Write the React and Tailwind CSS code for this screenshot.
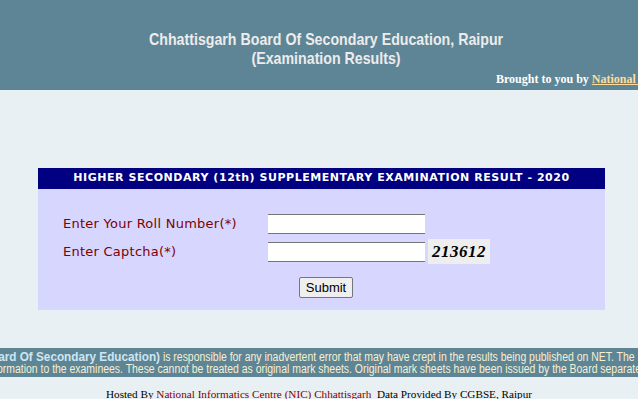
export default function App() {
  const arial = { fontFamily: '"Liberation Sans", Arial, sans-serif' };
  return (
    <div className="w-[638px] h-[399px] overflow-hidden bg-[#e9f0f3]">
      {/* Header */}
      <div className="h-[90px] bg-[#5e8595] flex flex-col items-center pt-[30px]">
        <div
          className="ml-[14px] text-[17px] font-bold leading-[19px] text-[#ececec] text-center scale-x-[0.835]"
          style={arial}
        >
          Chhattisgarh Board Of Secondary Education, Raipur
          <br />
          (Examination Results)
        </div>
        <div className="self-stretch pl-[496px] mt-[4px] whitespace-nowrap overflow-hidden font-['Liberation_Serif',serif] text-[12px] font-bold leading-[14px] text-white">
          Brought to you by{" "}
          <span className="text-[#ffdd99] underline">National Informatics Centre</span>
        </div>
      </div>

      {/* Form box */}
      <div className="mt-[78px] ml-[38px] w-[567px] h-[142px] bg-[#d6d6ff] flex flex-col">
        <div className="h-[21px] bg-[#000080] flex items-center justify-center font-['DejaVu_Sans',Verdana,sans-serif] text-[11px] tracking-[0.55px] font-bold text-white">
          HIGHER SECONDARY (12th) SUPPLEMENTARY EXAMINATION RESULT - 2020
        </div>
        <div className="pt-[25px] pl-[25px] flex flex-col gap-[9px] font-['DejaVu_Sans',Verdana,sans-serif] text-[13px] tracking-[0.25px] text-[#800000]">
          <div className="flex items-center h-[19px]">
            <span className="w-[205px]">Enter Your Roll Number(*)</span>
            <input className="w-[157px] h-[20px] bg-white border-y border-[#767676] outline-none" />
          </div>
          <div className="flex items-center h-[19px]">
            <span className="w-[205px]">Enter Captcha(*)</span>
            <input className="w-[157px] h-[20px] bg-white border-y border-[#767676] outline-none" />
            <div className="ml-[3px] w-[62px] h-[25px] bg-[#eeeeee] flex items-center justify-center font-['Liberation_Serif',serif] italic font-bold text-[17px] text-black tracking-[0.5px]">
              213612
            </div>
          </div>
        </div>
        <div className="mt-[16px] flex justify-center pl-[9px]">
          <button
            className="h-[21px] px-[6px] bg-[#efefef] border border-[#767676] rounded-[2px] text-[13px] text-black leading-none"
            style={arial}
          >
            Submit
          </button>
        </div>
      </div>

      {/* Disclaimer band */}
      <div
        className="mt-[38px] h-[29px] bg-[#5e8595] overflow-hidden flex flex-col justify-center text-[12px] leading-[12px] text-[#f6f0d2] whitespace-nowrap"
        style={arial}
      >
        <div className="ml-[-9px] scale-x-[0.87] origin-left">
          <span className="font-bold text-[13.5px] text-[#cfe6f2]">oard Of Secondary Education)</span> is responsible
          for any inadvertent error that may have crept in the results being published on NET. The results published on
          net are for immediate information to the examinees.
        </div>
        <div className="ml-[-3px] scale-x-[0.87] origin-left">
          ormation to the examinees. These cannot be treated as original mark sheets. Original mark sheets have been
          issued by the Board separately.
        </div>
      </div>

      {/* Footer */}
      <div className="mt-[10px] text-center font-['Liberation_Serif',serif] text-[11.2px] leading-[14px] text-black whitespace-nowrap">
        Hosted By <span className="text-[#800000]">National Informatics Centre (NIC) Chhattisgarh</span>
        {"\u00a0 "}Data Provided By CGBSE, Raipur
      </div>
    </div>
  );
}
